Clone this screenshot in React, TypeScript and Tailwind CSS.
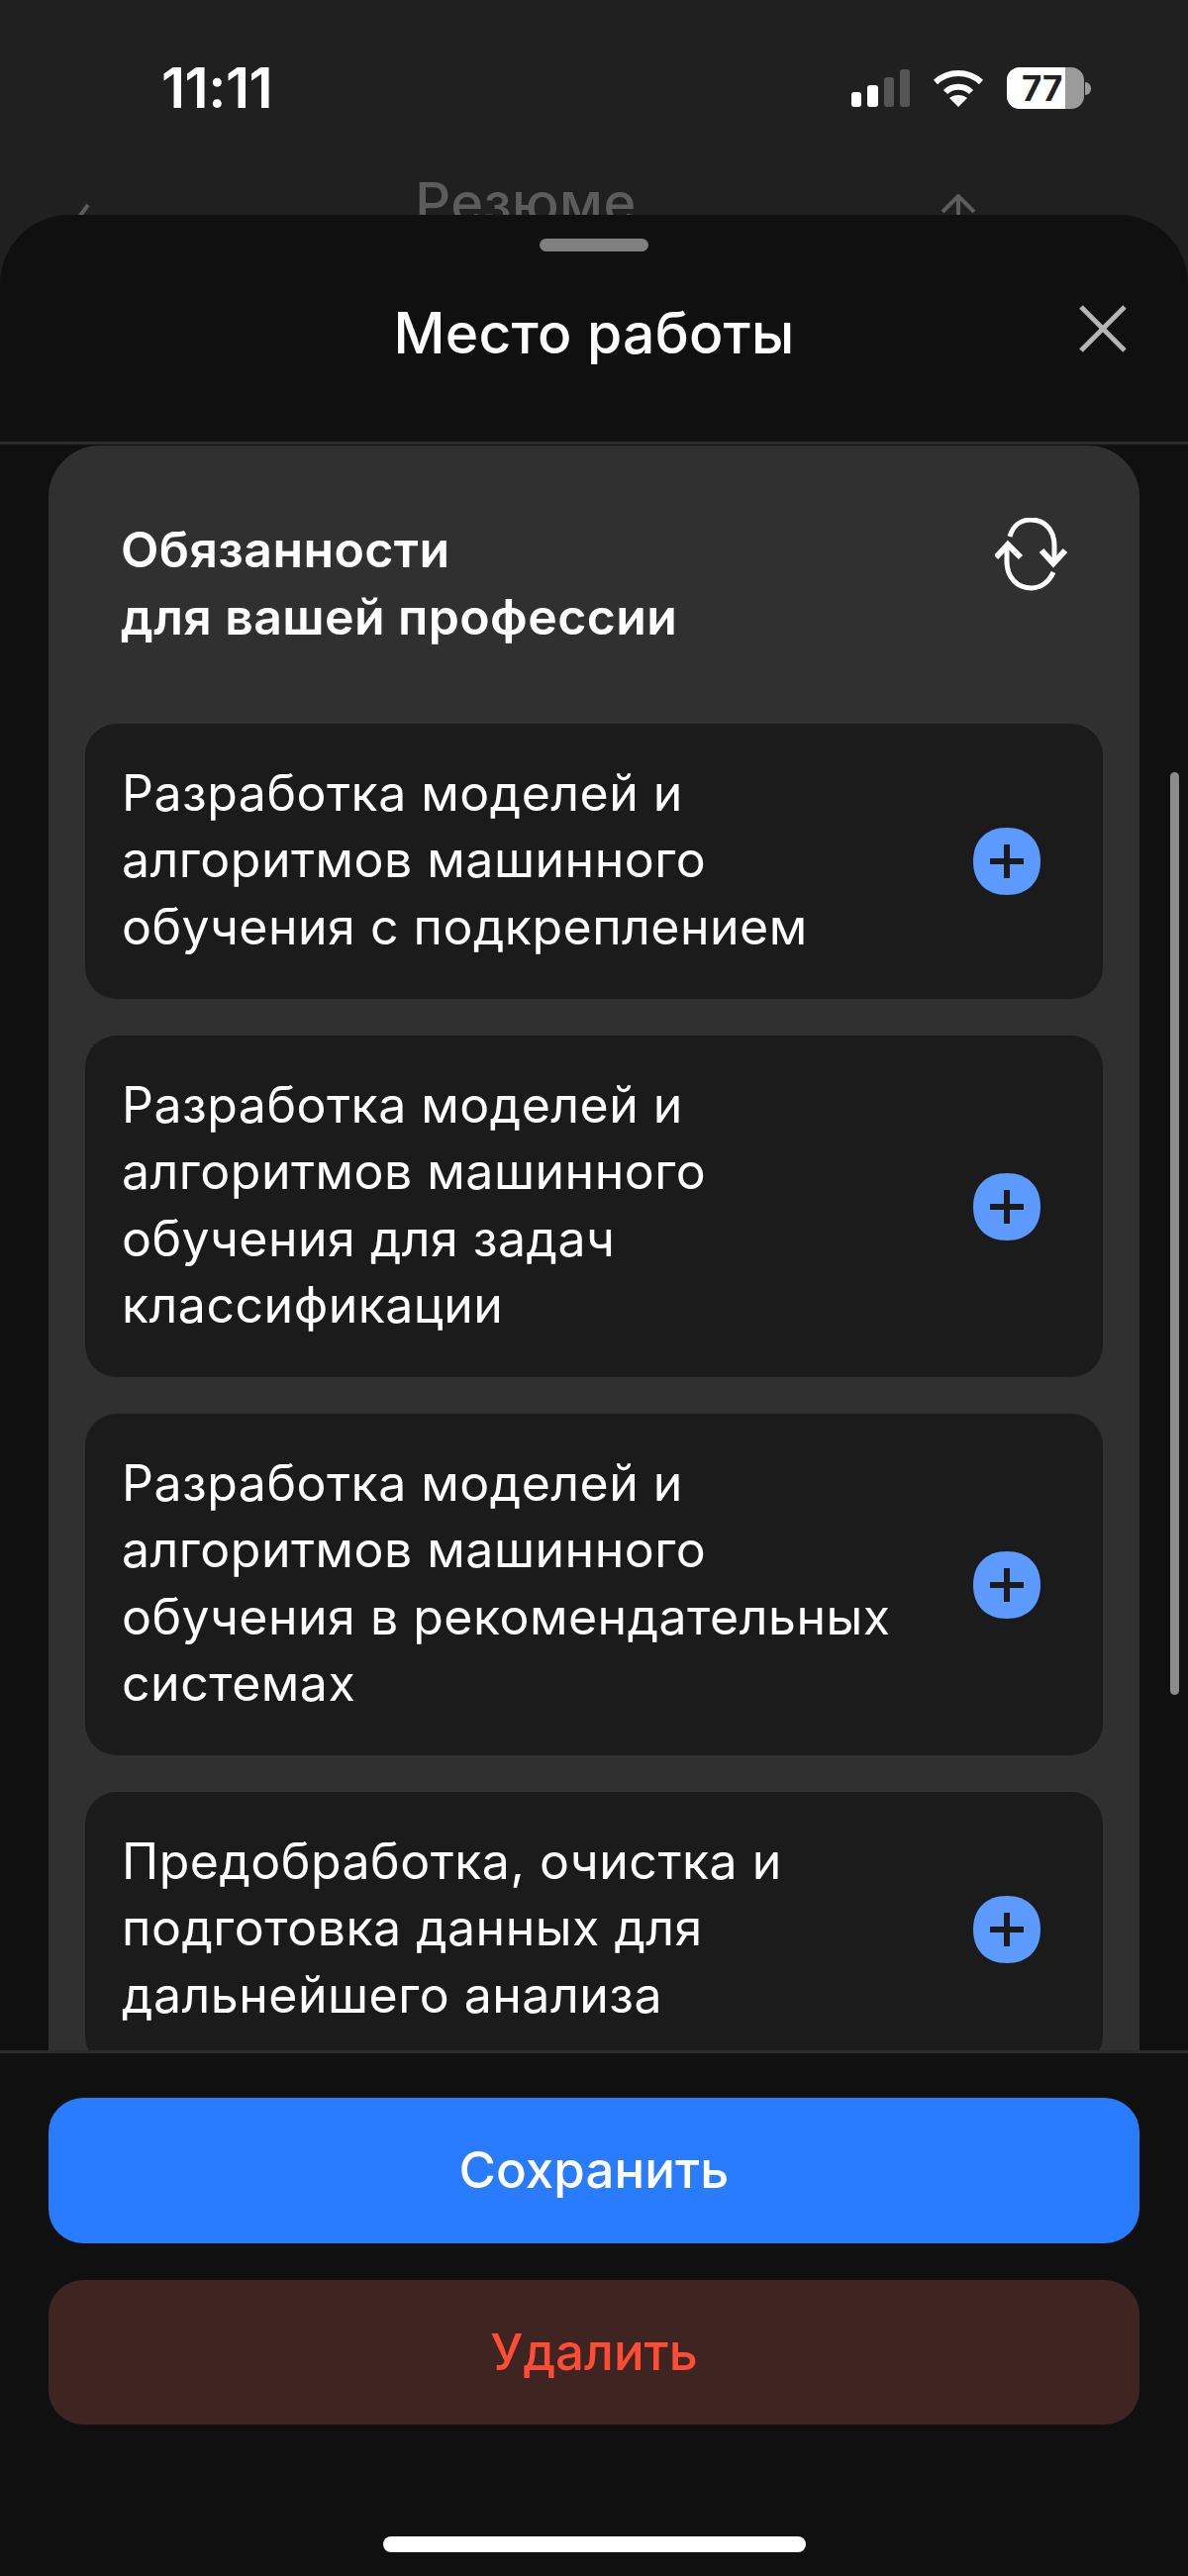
import React from "react";

const items = [
  { h: 278, t: ["Разработка моделей и", "алгоритмов машинного", "обучения с подкреплением"] },
  { h: 345, t: ["Разработка моделей и", "алгоритмов машинного", "обучения для задач", "классификации"] },
  { h: 345, t: ["Разработка моделей и", "алгоритмов машинного", "обучения в рекомендательных", "системах"] },
  { h: 278, t: ["Предобработка, очистка и", "подготовка данных для", "дальнейшего анализа"] },
];

function Plus() {
  return (
    <svg width="68" height="68" viewBox="0 0 68 68" className="shrink-0">
      <path d="M34 0C55 0 68 13 68 34C68 55 55 68 34 68C13 68 0 55 0 34C0 13 13 0 34 0Z" fill="#5c9aff" />
      <path d="M34 17V51M17 34H51" stroke="#1b1b1b" strokeWidth="6" />
    </svg>
  );
}

export default function App() {
  return (
    <div className="relative w-[1200px] h-[2602px] bg-[#202020] overflow-hidden flex flex-col text-white font-['Inter','Liberation_Sans',sans-serif]">
      <div className="h-[217px] shrink-0 overflow-hidden">
        <div className="flex items-center justify-between h-[60px] mt-[59px] pl-[163px] pr-[98px]">
          <div className="text-[57px] leading-[60px] font-semibold tracking-[-0.5px]">11:11</div>
          <div className="flex items-center gap-[23px]">
            <svg width="60" height="40" viewBox="0 0 60 40">
              <rect x="1" y="24" width="10" height="15" rx="3" fill="#fff" />
              <rect x="17" y="17" width="11" height="22" rx="3" fill="#fff" />
              <rect x="34" y="9" width="10" height="30" rx="3" fill="#555" />
              <rect x="50" y="1" width="10" height="38" rx="3" fill="#555" />
            </svg>
            <svg width="52" height="40" viewBox="0 0 52 40" fill="none">
              <path d="M3 14C16 2 36 2 49 14" stroke="#fff" strokeWidth="6" />
              <path d="M13 24C20 17 32 17 39 24" stroke="#fff" strokeWidth="6" />
              <path d="M26 39L17 30C22 26 30 26 35 30Z" fill="#fff" />
            </svg>
            <div className="flex items-center gap-[1px]">
              <div className="relative w-[78px] h-[42px] rounded-[13px] bg-[#9b9b9b] overflow-hidden">
                <div className="w-[59px] h-full bg-white" />
                <div className="absolute inset-0 flex items-center pl-[15px] text-[#222] text-[35px] font-bold leading-none">77</div>
              </div>
              <div className="w-[6px] h-[13px] rounded-r-full bg-[#9b9b9b]" />
            </div>
          </div>
        </div>
        <div className="relative h-[70px] mt-[51px]">
          <div className="text-center text-[#5c5c5c] text-[56px] leading-[70px] font-medium tracking-[0.4px] -ml-[138px]">Резюме</div>
          <svg className="absolute left-[76px] top-[35px]" width="20" height="20" viewBox="0 0 20 20" fill="none">
            <path d="M13 2L4 14" stroke="#5c5c5c" strokeWidth="4" />
          </svg>
          <svg className="absolute left-[948px] top-[26px]" width="40" height="40" viewBox="0 0 40 40" fill="none">
            <path d="M4 18L20 2L36 18M20 2V40" stroke="#5c5c5c" strokeWidth="4" />
          </svg>
        </div>
      </div>

      <div className="relative flex-1 min-h-0 bg-[#101010] rounded-t-[70px] flex flex-col">
        <div className="h-[232px] shrink-0 border-b-[3px] border-[#2c2c2c] relative">
          <div className="absolute left-[545px] top-[24px] w-[110px] h-[13px] rounded-full bg-[#808080]" />
          <div className="absolute inset-x-0 top-[85px] text-center text-[57px] leading-[70px] font-medium tracking-[0.2px]">Место работы</div>
          <svg className="absolute left-[1089px] top-[90px]" width="50" height="50" viewBox="0 0 50 50" fill="none">
            <path d="M3 3L47 47M47 3L3 47" stroke="#b5b5b5" strokeWidth="5" />
          </svg>
        </div>

        <div className="flex-1 min-h-0 overflow-hidden relative">
          <div className="mt-[1px] mx-[49px] px-[37px] bg-[#303030] rounded-[52px] pb-[40px]">
            <div className="flex justify-between h-[281px] pt-[73px]">
              <div className="ml-[36px] -mt-[2px] text-[50px] leading-[68px] font-semibold tracking-[0.4px]">
                <div>Обязанности</div>
                <div>для вашей профессии</div>
              </div>
              <svg className="mr-[35px]" width="74" height="74" viewBox="0 0 74 74" fill="none" stroke="#fff" strokeWidth="5">
                <path d="M15 19C18 8 26 2 36 2C50 2 60 12 60 28V44" />
                <path d="M47 33L59 46L71 33" strokeWidth="6" />
                <path d="M12 29V44C12 60 22 71 37 71C47 71 55 64 59 55" />
                <path d="M1 40L13 27L26 40" strokeWidth="6" />
              </svg>
            </div>
            <div className="flex flex-col gap-[37px]">
              {items.map((it, i) => (
                <div
                  key={i}
                  className="flex items-center justify-between pl-[37px] pr-[63px] bg-[#1b1b1b] rounded-[32px] shrink-0"
                  style={{ minHeight: it.h }}
                >
                  <div className="text-[50px] leading-[67.5px] tracking-[0.5px] pb-[2px]">
                    {it.t.map((l) => (
                      <div key={l}>{l}</div>
                    ))}
                  </div>
                  <Plus />
                </div>
              ))}
            </div>
          </div>
          <div className="absolute left-[1182px] top-[331px] w-[9px] h-[932px] rounded-full bg-[#8c8c8c]" />
        </div>

        <div className="h-[531px] shrink-0 border-t-[3px] border-[#2c2c2c] px-[49px] pt-[45px]">
          <div className="h-[147px] rounded-[35px] bg-[#2a7cff] flex items-center justify-center text-[51px] font-medium tracking-[0.1px]">Сохранить</div>
          <div className="h-[146px] mt-[37px] rounded-[35px] bg-[#3f2522] flex items-center justify-center text-[51px] font-medium text-[#ff4d35]">Удалить</div>
          <div className="mt-[113px] mx-auto w-[427px] h-[16px] rounded-full bg-white" />
        </div>
      </div>
    </div>
  );
}
